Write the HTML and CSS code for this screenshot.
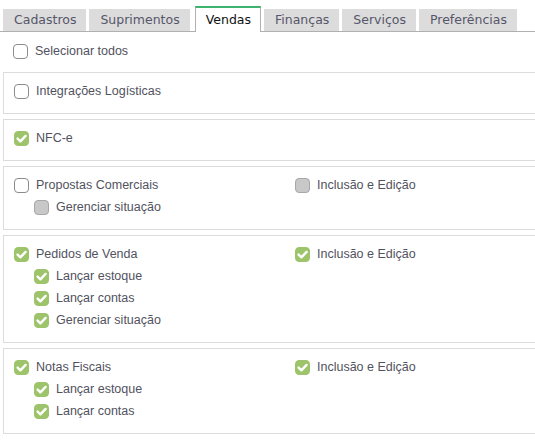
FILE: index.html
```html
<!DOCTYPE html>
<html lang="pt-BR">
<head>
<meta charset="utf-8">
<link rel="stylesheet" href="styles.css">
</head>
<body>
<div class="tabs">
  <div class="tab">Cadastros</div>
  <div class="tab">Suprimentos</div>
  <div class="tab active">Vendas</div>
  <div class="tab">Finanças</div>
  <div class="tab">Serviços</div>
  <div class="tab">Preferências</div>
</div>

<div class="row select-all"><span class="cb"></span><span>Selecionar todos</span></div>

<div class="sections">
  <div class="box">
    <div class="col">
      <div class="row"><span class="cb"></span><span>Integrações Logísticas</span></div>
    </div>
  </div>

  <div class="box">
    <div class="col">
      <div class="row"><span class="cb on"><svg viewBox="0 0 15 15"><path d="M3.6 7.6 L6.4 10.3 L11.6 4.9"/></svg></span><span>NFC-e</span></div>
    </div>
  </div>

  <div class="box">
    <div class="col">
      <div class="row"><span class="cb"></span><span>Propostas Comerciais</span></div>
      <div class="row sub"><span class="cb off"></span><span>Gerenciar situação</span></div>
    </div>
    <div class="col">
      <div class="row"><span class="cb off"></span><span>Inclusão e Edição</span></div>
    </div>
  </div>

  <div class="box">
    <div class="col">
      <div class="row"><span class="cb on"><svg viewBox="0 0 15 15"><path d="M3.6 7.6 L6.4 10.3 L11.6 4.9"/></svg></span><span>Pedidos de Venda</span></div>
      <div class="row sub"><span class="cb on"><svg viewBox="0 0 15 15"><path d="M3.6 7.6 L6.4 10.3 L11.6 4.9"/></svg></span><span>Lançar estoque</span></div>
      <div class="row sub"><span class="cb on"><svg viewBox="0 0 15 15"><path d="M3.6 7.6 L6.4 10.3 L11.6 4.9"/></svg></span><span>Lançar contas</span></div>
      <div class="row sub"><span class="cb on"><svg viewBox="0 0 15 15"><path d="M3.6 7.6 L6.4 10.3 L11.6 4.9"/></svg></span><span>Gerenciar situação</span></div>
    </div>
    <div class="col">
      <div class="row"><span class="cb on"><svg viewBox="0 0 15 15"><path d="M3.6 7.6 L6.4 10.3 L11.6 4.9"/></svg></span><span>Inclusão e Edição</span></div>
    </div>
  </div>

  <div class="box">
    <div class="col">
      <div class="row"><span class="cb on"><svg viewBox="0 0 15 15"><path d="M3.6 7.6 L6.4 10.3 L11.6 4.9"/></svg></span><span>Notas Fiscais</span></div>
      <div class="row sub"><span class="cb on"><svg viewBox="0 0 15 15"><path d="M3.6 7.6 L6.4 10.3 L11.6 4.9"/></svg></span><span>Lançar estoque</span></div>
      <div class="row sub"><span class="cb on"><svg viewBox="0 0 15 15"><path d="M3.6 7.6 L6.4 10.3 L11.6 4.9"/></svg></span><span>Lançar contas</span></div>
    </div>
    <div class="col">
      <div class="row"><span class="cb on"><svg viewBox="0 0 15 15"><path d="M3.6 7.6 L6.4 10.3 L11.6 4.9"/></svg></span><span>Inclusão e Edição</span></div>
    </div>
  </div>
</div>
</body>
</html>
```

FILE: styles.css
```css
html, body {
  margin: 0;
  padding: 0;
  background: #ffffff;
  overflow: hidden;
}

body {
  font-family: "Liberation Sans", Arial, sans-serif;
  font-size: 12.5px;
  color: #52525e;
}

.tabs {
  display: flex;
  align-items: flex-end;
  gap: 3px;
  height: 31px;
  padding-left: 3px;
  border-bottom: 1px solid #b0b0b0;
}

.tab {
  font-family: "DejaVu Sans", Verdana, sans-serif;
  font-size: 12.5px;
  color: #56566a;
  background: #dcdcdc;
  height: 22px;
  line-height: 22px;
  padding: 0 10px 0 11px;
  white-space: nowrap;
}

.tab.active {
  background: #ffffff;
  color: #111111;
  height: 22px;
  border-top: 2px solid #3db46d;
  border-left: 1px solid #b0b0b0;
  border-right: 1px solid #b0b0b0;
  padding: 1px 9px 1px 10px;
  margin: 0 0 -1px 2px;
}

.row {
  display: flex;
  align-items: center;
  gap: 7px;
  height: 22px;
  white-space: nowrap;
}

.row.sub {
  padding-left: 20px;
}

.select-all {
  margin: 8px 0 10px 13px;
}

.sections {
  margin: 0 -20px 0 3px;
  display: flex;
  flex-direction: column;
  gap: 5px;
}

.box {
  border: 1px solid #dcdcdc;
  padding: 7px 10px 11px 10px;
  display: grid;
  grid-template-columns: 281px 1fr;
}

.cb {
  box-sizing: border-box;
  width: 15px;
  height: 15px;
  border: 1px solid #8c8c8c;
  border-radius: 4px;
  background: #ffffff;
  flex: none;
  display: flex;
}

.cb.on {
  background: #9dc46b;
  border-color: #9dc46b;
}

.cb.off {
  background: #c8c8c8;
  border-color: #a8a8a8;
}

.cb svg {
  margin: -1px;
  width: 15px;
  height: 15px;
}

.cb svg path {
  fill: none;
  stroke: #ffffff;
  stroke-width: 2.4;
  stroke-linecap: round;
  stroke-linejoin: round;
}
```
